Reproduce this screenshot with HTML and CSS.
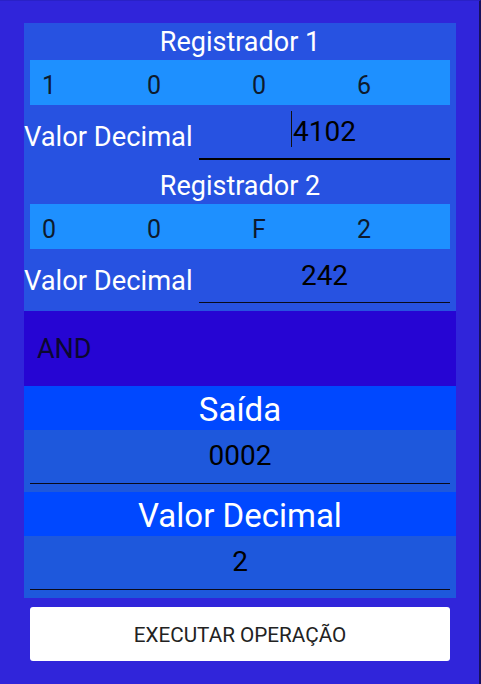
FILE: index.html
```html
<!DOCTYPE html>
<html lang="pt">
<head>
<meta charset="utf-8">
<title>Operações com registradores</title>
<link rel="stylesheet" href="styles.css">
</head>
<body>
<div class="screen">
  <div class="panel">
    <section class="reg">
      <div class="reg-title">Registrador 1</div>
      <div class="hex-row">
        <span class="hex">1</span><span class="hex">0</span><span class="hex">0</span><span class="hex">6</span>
      </div>
      <div class="value-row">
        <span class="value-label">Valor Decimal</span>
        <div class="value-input focused"><span class="value-text"><span class="caret"></span>4102</span></div>
      </div>
    </section>
    <section class="reg">
      <div class="reg-title">Registrador 2</div>
      <div class="hex-row">
        <span class="hex">0</span><span class="hex">0</span><span class="hex">F</span><span class="hex">2</span>
      </div>
      <div class="value-row">
        <span class="value-label">Valor Decimal</span>
        <div class="value-input"><span class="value-text">242</span></div>
      </div>
    </section>
  </div>
  <div class="op">AND</div>
  <div class="panel">
    <div class="out-head">Saída</div>
    <div class="out-field"><div class="out-input">0002</div></div>
    <div class="out-head">Valor Decimal</div>
    <div class="out-field"><div class="out-input">2</div></div>
  </div>
  <button class="exec">EXECUTAR OPERAÇÃO</button>
</div>
</body>
</html>
```

FILE: styles.css
```css
html, body {
  margin: 0;
  padding: 0;
}
body {
  width: 481px;
  height: 684px;
  background: #3025da;
  font-family: Roboto, "Noto Sans", sans-serif;
  overflow: hidden;
}
.screen {
  box-sizing: border-box;
  width: 481px;
  height: 684px;
  padding-top: 22px;
  border-top: 1px solid #2a21c6;
  border-right: 2px solid #17115e;
}
.panel {
  width: 432px;
  margin-left: 24px;
  background: #2752e1;
}
.reg-title {
  height: 37px;
  box-sizing: border-box;
  padding-top: 2px;
  line-height: 35px;
  font-size: 27px;
  color: #fff;
  text-align: center;
}
.hex-row {
  margin: 0 6px;
  height: 45px;
  background: #1e90ff;
  display: grid;
  grid-template-columns: repeat(4, 1fr);
  box-sizing: border-box;
  padding-top: 6px;
}
.hex {
  padding-left: 12px;
  font-size: 25px;
  line-height: 39px;
  color: #0d1a2e;
}
.value-row {
  height: 62px;
  display: flex;
  align-items: flex-start;
}
.value-label {
  padding-top: 16px;
  font-size: 27.3px;
  line-height: 32px;
  color: #fff;
}
.value-input {
  margin-left: auto;
  margin-right: 6px;
  width: 251px;
  height: 53px;
  box-sizing: content-box;
  border-bottom: 1px solid #0a0a1a;
  text-align: center;
}
.value-input.focused {
  border-bottom: 2px solid #000;
}
.value-text {
  position: relative;
  display: inline-block;
  padding-top: 11px;
  font-size: 28px;
  line-height: 32px;
  color: #000;
}
.caret {
  position: absolute;
  left: -2px;
  top: 6px;
  width: 1px;
  height: 36px;
  background: #111;
}
.op {
  width: 432px;
  margin-left: 24px;
  height: 75px;
  box-sizing: border-box;
  background: #2605d3;
  padding: 22px 0 0 13px;
  font-size: 27px;
  line-height: 32px;
  color: #0b0830;
}
.out-head {
  height: 44px;
  box-sizing: border-box;
  padding-top: 3px;
  background: #0048ff;
  color: #fff;
  font-size: 33px;
  line-height: 41px;
  text-align: center;
}
.out-field {
  height: 62px;
  box-sizing: border-box;
  padding: 0 6px;
  background: #1e58dc;
}
.out-input {
  height: 54px;
  box-sizing: border-box;
  padding-top: 10px;
  border-bottom: 1px solid #0a0a1a;
  font-size: 28px;
  line-height: 32px;
  text-align: center;
  color: #000;
}
.exec {
  display: block;
  margin: 9px 0 0 30px;
  width: 420px;
  height: 54px;
  border: none;
  border-radius: 3px;
  background: #fff;
  font-family: Roboto, "Noto Sans", sans-serif;
  font-size: 20.7px;
  color: #222;
  padding: 2px 0 0;
}
```
